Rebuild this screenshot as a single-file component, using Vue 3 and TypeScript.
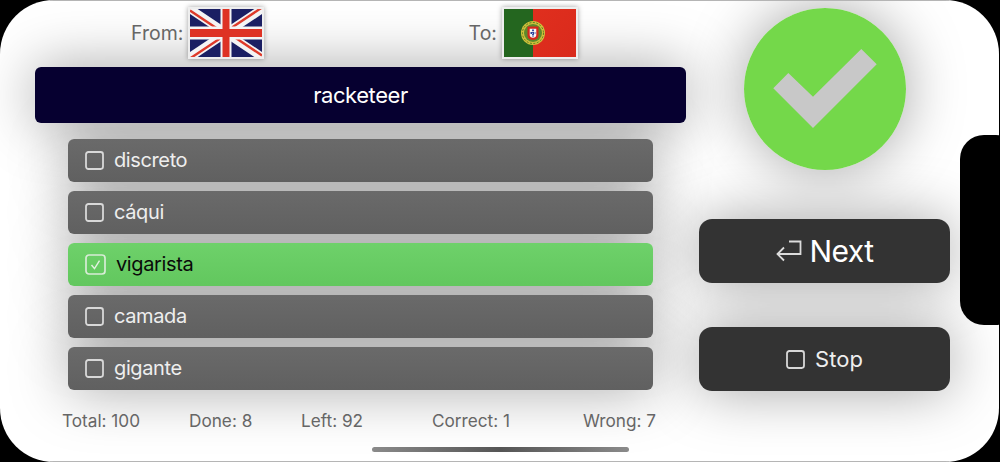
<script setup lang="ts">
interface Option { label: string; selected: boolean }
const options: Option[] = [
  { label: 'discreto', selected: false },
  { label: 'cáqui', selected: false },
  { label: 'vigarista', selected: true },
  { label: 'camada', selected: false },
  { label: 'gigante', selected: false },
]
const stats: string[] = ['Total: 100', 'Done: 8', 'Left: 92', 'Correct: 1', 'Wrong: 7']
</script>

<template>
  <div class="device">
    <div class="screen">
      <main class="left">
        <header class="flags">
          <div class="lang">
            <span>From:</span>
            <svg class="flag" viewBox="0 0 72 48" preserveAspectRatio="none">
              <rect width="72" height="48" fill="#1b1f63" />
              <path d="M0 0L72 48M72 0L0 48" stroke="#f4f4f4" stroke-width="8.500" />
              <path d="M0 1.500L30 21.500M72 46.500L42 26.500M72 -1.500L42 18.500M0 49.500L30 29.500" stroke="#de3a2a" stroke-width="2.400" />
              <path d="M36 0V48" stroke="#f4f4f4" stroke-width="11" />
              <path d="M0 24H72" stroke="#f4f4f4" stroke-width="13" />
              <path d="M36 0V48" stroke="#de3224" stroke-width="7" />
              <path d="M0 24H72" stroke="#de3224" stroke-width="8" />
            </svg>
          </div>
          <div class="lang">
            <span>To:</span>
            <svg class="flag" viewBox="0 0 72 48" preserveAspectRatio="none">
              <defs>
                <linearGradient id="ptRed" x1="0" y1="0" x2="1" y2="1">
                  <stop offset="0" stop-color="#e02f1e" />
                  <stop offset="1" stop-color="#d92a1c" />
                </linearGradient>
              </defs>
              <rect width="29" height="48" fill="#24661f" />
              <rect x="29" width="43" height="48" fill="url(#ptRed)" />
              <circle cx="29" cy="24" r="12" fill="#cfc03a" />
              <circle cx="29" cy="24" r="9" fill="#5d8a2c" />
              <circle cx="29" cy="24" r="10.500" fill="none" stroke="#3e6a20" stroke-width=".8" stroke-dasharray="2 1.500" />
              <path d="M23.500 17.500H34.500V26.500Q34.500 30.500 29 31Q23.500 30.500 23.500 26.500Z" fill="#d5271c" />
              <path d="M25.700 19.700H32.300V26Q32.300 28.500 29 28.800Q25.700 28.500 25.700 26Z" fill="#f6f6f6" />
              <path d="M29 20.500V28M26.500 24H31.500" stroke="#2a3f9a" stroke-width="1.800" stroke-dasharray="1.500 .8" />
            </svg>
          </div>
        </header>

        <div class="word shadowed">racketeer</div>

        <ul class="options">
          <li v-for="o in options" :key="o.label" class="option shadowed" :class="{ selected: o.selected }">
            <svg v-if="o.selected" class="box box-on" viewBox="0 0 21 21">
              <rect x="1" y="1" width="19" height="19" rx="3" fill="none" stroke="#d8ecd6" stroke-width="1.700" />
              <path d="M6.500 11l3 3.600 5-8" fill="none" stroke="#e4f2e2" stroke-width="1.400" />
            </svg>
            <svg v-else class="box" viewBox="0 0 19 19">
              <rect x="1" y="1" width="17" height="17" rx="2.400" fill="none" stroke="#d8d8d8" stroke-width="1.800" />
            </svg>
            <span>{{ o.label }}</span>
          </li>
        </ul>

        <footer class="stats">
          <span v-for="s in stats" :key="s">{{ s }}</span>
        </footer>
      </main>

      <aside class="right">
        <div class="badge shadowed">
          <svg viewBox="0 0 162 162">
            <circle cx="81" cy="81" r="81" fill="#74d84a" />
            <path d="M29.300 80.300L44.300 65L69 88.700L117.300 41L132.700 56.300L69 120Z" fill="#c8c8c8" />
          </svg>
        </div>
        <button class="action next shadowed">
          <svg class="return" viewBox="0 0 26 22">
            <path d="M13 1.500H24.500V14H1.500M8 7.500L1.500 14L8 20.500" fill="none" stroke="#dcdcdc" stroke-width="1.800" />
          </svg>
          <span>Next</span>
        </button>
        <button class="action stop shadowed">
          <svg class="stop-box" viewBox="0 0 19 19">
            <rect x="1" y="1" width="17" height="17" rx="2.400" fill="none" stroke="#d8d8d8" stroke-width="1.800" />
          </svg>
          <span>Stop</span>
        </button>
      </aside>

      <div class="notch"></div>
      <div class="home"></div>
    </div>
  </div>
</template>

<style>
html, body { margin: 0; background: #000; }
</style>

<style scoped>
.device {
  width: 1000px;
  height: 462px;
  background: #000;
  overflow: hidden;
  font-family: Inter, "Liberation Sans", sans-serif;
}
.screen {
  position: relative;
  z-index: 0;
  box-sizing: border-box;
  width: 999px;
  height: 462px;
  padding-left: 35px;
  display: flex;
  gap: 13px;
  background: #fff;
  border-radius: 54px;
  overflow: hidden;
}
.screen::before,
.screen::after {
  content: "";
  position: absolute;
  left: 50px;
  right: 50px;
  height: 1px;
  background: #b5b5b5;
}
.screen::before { top: 0; }
.screen::after { bottom: 0; }
.shadowed { position: relative; }
.shadowed::before {
  content: "";
  position: absolute;
  inset: 0;
  z-index: -1;
  border-radius: inherit;
  box-shadow: 0 0 58px rgba(0, 0, 0, .36);
}
.left {
  width: 651px;
  display: flex;
  flex-direction: column;
}
.flags {
  height: 67px;
  display: grid;
  grid-template-columns: 1fr 1fr;
}
.lang {
  display: flex;
  align-items: center;
  justify-content: center;
  gap: 5px;
  font-size: 19.500px;
  color: #666;
  padding-bottom: 2px;
}
.flag {
  box-sizing: border-box;
  width: 76px;
  height: 52px;
  border: 2px solid #eee;
  box-shadow: 0 0 5px rgba(0, 0, 0, .35);
  display: block;
}
.word {
  height: 56px;
  flex: none;
  display: flex;
  align-items: center;
  justify-content: center;
  background: #060030;
  border-radius: 6px;
  color: #fff;
  font-size: 22px;
  letter-spacing: -.44px;
}
.options {
  list-style: none;
  margin: 16px 0 0;
  padding: 0 33px;
  display: flex;
  flex-direction: column;
  gap: 9px;
}
.option {
  height: 43px;
  box-sizing: border-box;
  padding-left: 17px;
  padding-bottom: 1px;
  display: flex;
  align-items: center;
  gap: 10px;
  border-radius: 6px;
  background: linear-gradient(#6a6a6a, #606060);
  color: #eee;
  font-size: 20px;
  letter-spacing: -.38px;
}
.option.selected {
  background: linear-gradient(#6ed16a, #62c75e);
  color: #0a0a0a;
}
.box { width: 19px; height: 19px; flex: none; }
.box-on { width: 21px; height: 21px; }
.stats {
  margin: 20px 0 0 27px;
  display: grid;
  grid-template-columns: 127px 112px 131px 151px auto;
  font-size: 17.200px;
  color: #666;
}
.right {
  width: 251px;
  flex: none;
  display: flex;
  flex-direction: column;
  align-items: center;
  padding-top: 8px;
}
.badge {
  width: 162px;
  height: 162px;
  border-radius: 50%;
  margin-bottom: 49px;
}
.badge svg { display: block; width: 162px; height: 162px; }
.action {
  width: 100%;
  height: 64px;
  flex: none;
  border: 0;
  padding: 0;
  background: #333;
  border-radius: 13px;
  color: #fff;
  font-family: inherit;
  display: flex;
  align-items: center;
  justify-content: center;
}
.next { font-size: 30px; gap: 8px; margin-bottom: 44px; letter-spacing: -.6px; }
.stop { font-size: 22px; gap: 10px; color: #eee; }
.return { width: 26px; height: 22px; }
.stop-box { width: 19px; height: 19px; }
.notch {
  position: absolute;
  left: 960px;
  top: 135px;
  width: 60px;
  height: 190px;
  background: #000;
  border-radius: 24px;
}
.home {
  position: absolute;
  left: 372px;
  top: 447px;
  width: 257px;
  height: 5px;
  border-radius: 3px;
  background: linear-gradient(90deg, #8a8a8a, #555 50%, #8a8a8a);
}
</style>
